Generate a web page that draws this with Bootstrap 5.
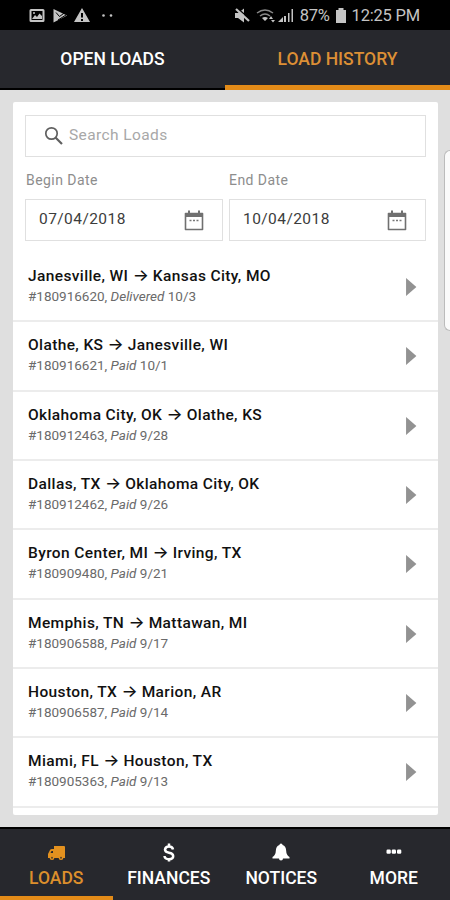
<!DOCTYPE html>
<html lang="en">
<head>
<meta charset="utf-8">
<meta name="viewport" content="width=device-width, initial-scale=1">
<title>Load History</title>
<link href="https://cdn.jsdelivr.net/npm/bootstrap@5.3.0/dist/css/bootstrap.min.css" rel="stylesheet">
<style>
body{font-family:Roboto,"Liberation Sans",sans-serif;background:#dfdfdf;height:900px;overflow:hidden;color:#111}
svg{display:block;flex:none}
.status{height:30px;background:#000;color:#c4c4c4;font-size:16.5px;line-height:30px;padding:1px 30px 0 29px}
.status .clock{letter-spacing:-.2px}
.status .pct{letter-spacing:-.3px}
.tabs{height:60px;background:#27282d;border-bottom:2px solid #000;font-size:17.5px;font-weight:500;color:#fff}
.tabs .on{color:#dc8f35;height:60px;border-bottom:5px solid #e38b18}
.tabs a,.bottom a{color:inherit;text-decoration:none}
.tabs a{line-height:59px;height:58px}
.panel{margin:12px 12px 0 13px;height:713px;background:#fff;border-radius:2px}
.filters{padding:13px 12px 0 12px;height:151px}
.field{height:42px;border:1px solid #e0e0e0;background:#fff;color:#3c3c3c;font-size:15.5px;letter-spacing:.43px;line-height:38px}
.field span{margin-top:-3px}
.search{color:#a8a8a8;padding-left:17px;letter-spacing:.4px}
.lbl{color:#8d8d8d;font-size:14px;letter-spacing:.45px;line-height:20px;padding:13px 0 0 1px;height:42px}
.lbl+.lbl{padding-left:0}
.dates{display:grid;grid-template-columns:198px 1fr;column-gap:6px}
.dates .field{padding:0 17px 0 13px}
.load{height:69.35px;padding:13px 21px 0 15px;border-bottom:2px solid #ececec}
.route{font-size:15.5px;font-weight:500;letter-spacing:.38px;line-height:20px;white-space:nowrap}
.route i{font-family:Inter,"DejaVu Sans",sans-serif;font-style:normal;font-size:17px;line-height:1;letter-spacing:0;display:inline-block;width:16px;text-align:center}
.meta{font-size:13.5px;line-height:21px;color:#6a6a6a;white-space:nowrap}
.bottom{margin-top:12px;height:73px;background:#27282d;border-top:2px solid #000;color:#fff;font-size:17.5px;font-weight:500}
.bottom a{padding-top:13px;border-bottom:4px solid transparent;height:71px;line-height:29px;flex:1 1 0}
.bottom .on{color:#dc8f2c;border-color:#e38b18}
.edge{right:0;top:150px;width:6px;height:181px;background:#fafafa;border:1px solid #bbb;border-right:0;border-radius:6px 0 0 6px}
</style>
</head>
<body class="position-relative">
<header>
<div class="status d-flex align-items-center">
  <svg width="86" height="16" viewBox="0 0 86 16" fill="#c4c4c4"><path fill-rule="evenodd" d="M2 1h12a1.500 1.500 0 0 1 1.500 1.500v10A1.500 1.500 0 0 1 14 14H2a1.500 1.500 0 0 1-1.500-1.500v-10A1.500 1.500 0 0 1 2 1ZM2.500 3v9h11V3Z"/><path d="m3 11 3-4 2 2 2.500-3.500L13 8v3Z"/><circle cx="5" cy="5" r="1"/><path d="M24.500 1 38 7.500 24.500 14.500Z"/><path d="m27 4.500 3.500 4L38 3M29 12l8-5" fill="none" stroke="#000" stroke-width="1"/><path fill-rule="evenodd" d="M53 0l8 14H45ZM52 5v4.500h2V5Zm0 6v2h2v-2Z"/><circle cx="74.500" cy="7.500" r="1.300"/><circle cx="82" cy="7.500" r="1.300"/></svg>
  <div class="d-flex align-items-center ms-auto">
    <svg width="66" height="16" viewBox="0 0 66 16" fill="#c4c4c4"><path d="M1 5h3l6-4.500v14L4 10H1Z"/><path d="m3 0 14 12" stroke="#000" stroke-width="1.500"/><path d="m2 1 13 12" stroke="#c4c4c4" stroke-width="2.200"/><g fill="none" stroke="#888" stroke-width="1.500"><path d="M23 5q8-6 16 0M26 8q5-4 10 0"/></g><path d="m28 10 3 3 3-3q-3-2-6 0ZM35 11l2-3 2 3Zm2 1h4l-2 2.500Z"/><path d="m44 14 5-5v5Zm6-6h2v6h-2Zm4-3h1.500v9H54Zm3.500-4H59v13h-1.500Z"/></svg>
    <span class="pct">87%</span>
    <svg class="ms-1 me-1" width="14" height="16" viewBox="0 0 14 16" fill="#c4c4c4"><path d="M4.500 0h5v2H12v13H2V2h2.500Z"/></svg>
    <span class="clock">12:25 PM</span>
  </div>
</div>
<nav class="tabs d-flex text-center"><a class="w-50" href="#">OPEN LOADS</a><a class="w-50 on" href="#">LOAD HISTORY</a></nav>
</header>
<main class="panel overflow-hidden">
<div class="filters">
  <div class="field search d-flex align-items-center"><svg class="me-1" width="22" height="22" viewBox="0 0 22 22" fill="none" stroke="#606060" stroke-width="1.700"><circle cx="8.500" cy="8.500" r="5.700"/><path d="m12.500 12.500 6.500 6.500" stroke-width="2.200"/></svg><span>Search Loads</span></div>
  <div class="dates"><div class="lbl">Begin Date</div><div class="lbl">End Date</div>
  <div class="field d-flex justify-content-between align-items-center"><span>07/04/2018</span><svg width="22" height="24" viewBox="0 0 22 24"><path d="M2.500 5.500h17v16h-17Z" fill="none" stroke="#707070" stroke-width="1.600" stroke-linejoin="round"/><path d="M2.500 5h17v4h-17ZM5 2.500h2v4H5Zm10 0h2v4h-2Z" fill="#707070"/><path d="M6.500 12.500h2m1.500 0h2m1.500 0h2" stroke="#777" stroke-width="1.500"/></svg></div>
  <div class="field d-flex justify-content-between align-items-center"><span>10/04/2018</span><svg width="22" height="24" viewBox="0 0 22 24"><path d="M2.500 5.500h17v16h-17Z" fill="none" stroke="#707070" stroke-width="1.600" stroke-linejoin="round"/><path d="M2.500 5h17v4h-17ZM5 2.500h2v4H5Zm10 0h2v4h-2Z" fill="#707070"/><path d="M6.500 12.500h2m1.500 0h2m1.500 0h2" stroke="#777" stroke-width="1.500"/></svg></div></div>
</div>
<div class="load d-flex justify-content-between"><div><div class="route">Janesville, WI <i>→</i> Kansas City, MO</div><div class="meta">#180916620, <em>Delivered</em> 10/3</div></div><svg class="mt-2 pt-1" width="12" height="22" viewBox="0 0 12 20" fill="#929292"><path d="M.5 0v20l11.500-10Z"/></svg></div>
<div class="load d-flex justify-content-between"><div><div class="route">Olathe, KS <i>→</i> Janesville, WI</div><div class="meta">#180916621, <em>Paid</em> 10/1</div></div><svg class="mt-2 pt-1" width="12" height="22" viewBox="0 0 12 20" fill="#929292"><path d="M.5 0v20l11.500-10Z"/></svg></div>
<div class="load d-flex justify-content-between"><div><div class="route">Oklahoma City, OK <i>→</i> Olathe, KS</div><div class="meta">#180912463, <em>Paid</em> 9/28</div></div><svg class="mt-2 pt-1" width="12" height="22" viewBox="0 0 12 20" fill="#929292"><path d="M.5 0v20l11.500-10Z"/></svg></div>
<div class="load d-flex justify-content-between"><div><div class="route">Dallas, TX <i>→</i> Oklahoma City, OK</div><div class="meta">#180912462, <em>Paid</em> 9/26</div></div><svg class="mt-2 pt-1" width="12" height="22" viewBox="0 0 12 20" fill="#929292"><path d="M.5 0v20l11.500-10Z"/></svg></div>
<div class="load d-flex justify-content-between"><div><div class="route">Byron Center, MI <i>→</i> Irving, TX</div><div class="meta">#180909480, <em>Paid</em> 9/21</div></div><svg class="mt-2 pt-1" width="12" height="22" viewBox="0 0 12 20" fill="#929292"><path d="M.5 0v20l11.500-10Z"/></svg></div>
<div class="load d-flex justify-content-between"><div><div class="route">Memphis, TN <i>→</i> Mattawan, MI</div><div class="meta">#180906588, <em>Paid</em> 9/17</div></div><svg class="mt-2 pt-1" width="12" height="22" viewBox="0 0 12 20" fill="#929292"><path d="M.5 0v20l11.500-10Z"/></svg></div>
<div class="load d-flex justify-content-between"><div><div class="route">Houston, TX <i>→</i> Marion, AR</div><div class="meta">#180906587, <em>Paid</em> 9/14</div></div><svg class="mt-2 pt-1" width="12" height="22" viewBox="0 0 12 20" fill="#929292"><path d="M.5 0v20l11.500-10Z"/></svg></div>
<div class="load d-flex justify-content-between"><div><div class="route">Miami, FL <i>→</i> Houston, TX</div><div class="meta">#180905363, <em>Paid</em> 9/13</div></div><svg class="mt-2 pt-1" width="12" height="22" viewBox="0 0 12 20" fill="#929292"><path d="M.5 0v20l11.500-10Z"/></svg></div>
</main>
<nav class="bottom d-flex text-center">
<a class="on d-flex flex-column align-items-center" href="#"><svg width="20" height="22" viewBox="0 0 20 22" fill="#e3911f"><path fill-rule="evenodd" d="M8 4h10q1 0 1 1v11H2v-4l2-4q.5-1 2-1h2ZM4.500 11H7V9H5.500Z"/><circle cx="6" cy="15.700" r="2.400"/><circle cx="15" cy="15.700" r="2.400"/><g fill="#5a4327"><circle cx="6" cy="15.700" r="1"/><circle cx="15" cy="15.700" r="1"/></g></svg><span>LOADS</span></a>
<a class="d-flex flex-column align-items-center" href="#"><svg width="20" height="22" viewBox="0 0 20 22" fill="none" stroke="#fff" stroke-width="2.500"><path d="M14 7.500Q13.500 4.500 10 4.500T6 7.500Q6 10 10 10.700T14.200 14q0 3.200-4.200 3.200T5.500 14M10 1.500v3.500M10 16.500v3"/></svg><span>FINANCES</span></a>
<a class="d-flex flex-column align-items-center" href="#"><svg width="20" height="22" viewBox="0 0 20 22" fill="#fff"><path d="M10 1.500q1.500 0 1.600 1.500Q15 4 15.200 9q.1 4 3.300 6v1.500h-17V15q3.200-2 3.300-6Q5 4 8.400 3 8.500 1.500 10 1.500Zm-2 15h4q0 2-2 2t-2-2Z"/></svg><span>NOTICES</span></a>
<a class="d-flex flex-column align-items-center" href="#"><svg width="20" height="22" viewBox="0 0 20 22" fill="#fff"><rect x="2.500" y="7.500" width="4.300" height="4.300" rx="1.200"/><rect x="7.700" y="7.500" width="4.300" height="4.300" rx="1.200"/><rect x="13" y="7.500" width="4.300" height="4.300" rx="1.200"/></svg><span>MORE</span></a>
</nav>
<div class="edge position-absolute"></div>
<script src="https://cdn.jsdelivr.net/npm/bootstrap@5.3.0/dist/js/bootstrap.bundle.min.js"></script>
</body>
</html>
